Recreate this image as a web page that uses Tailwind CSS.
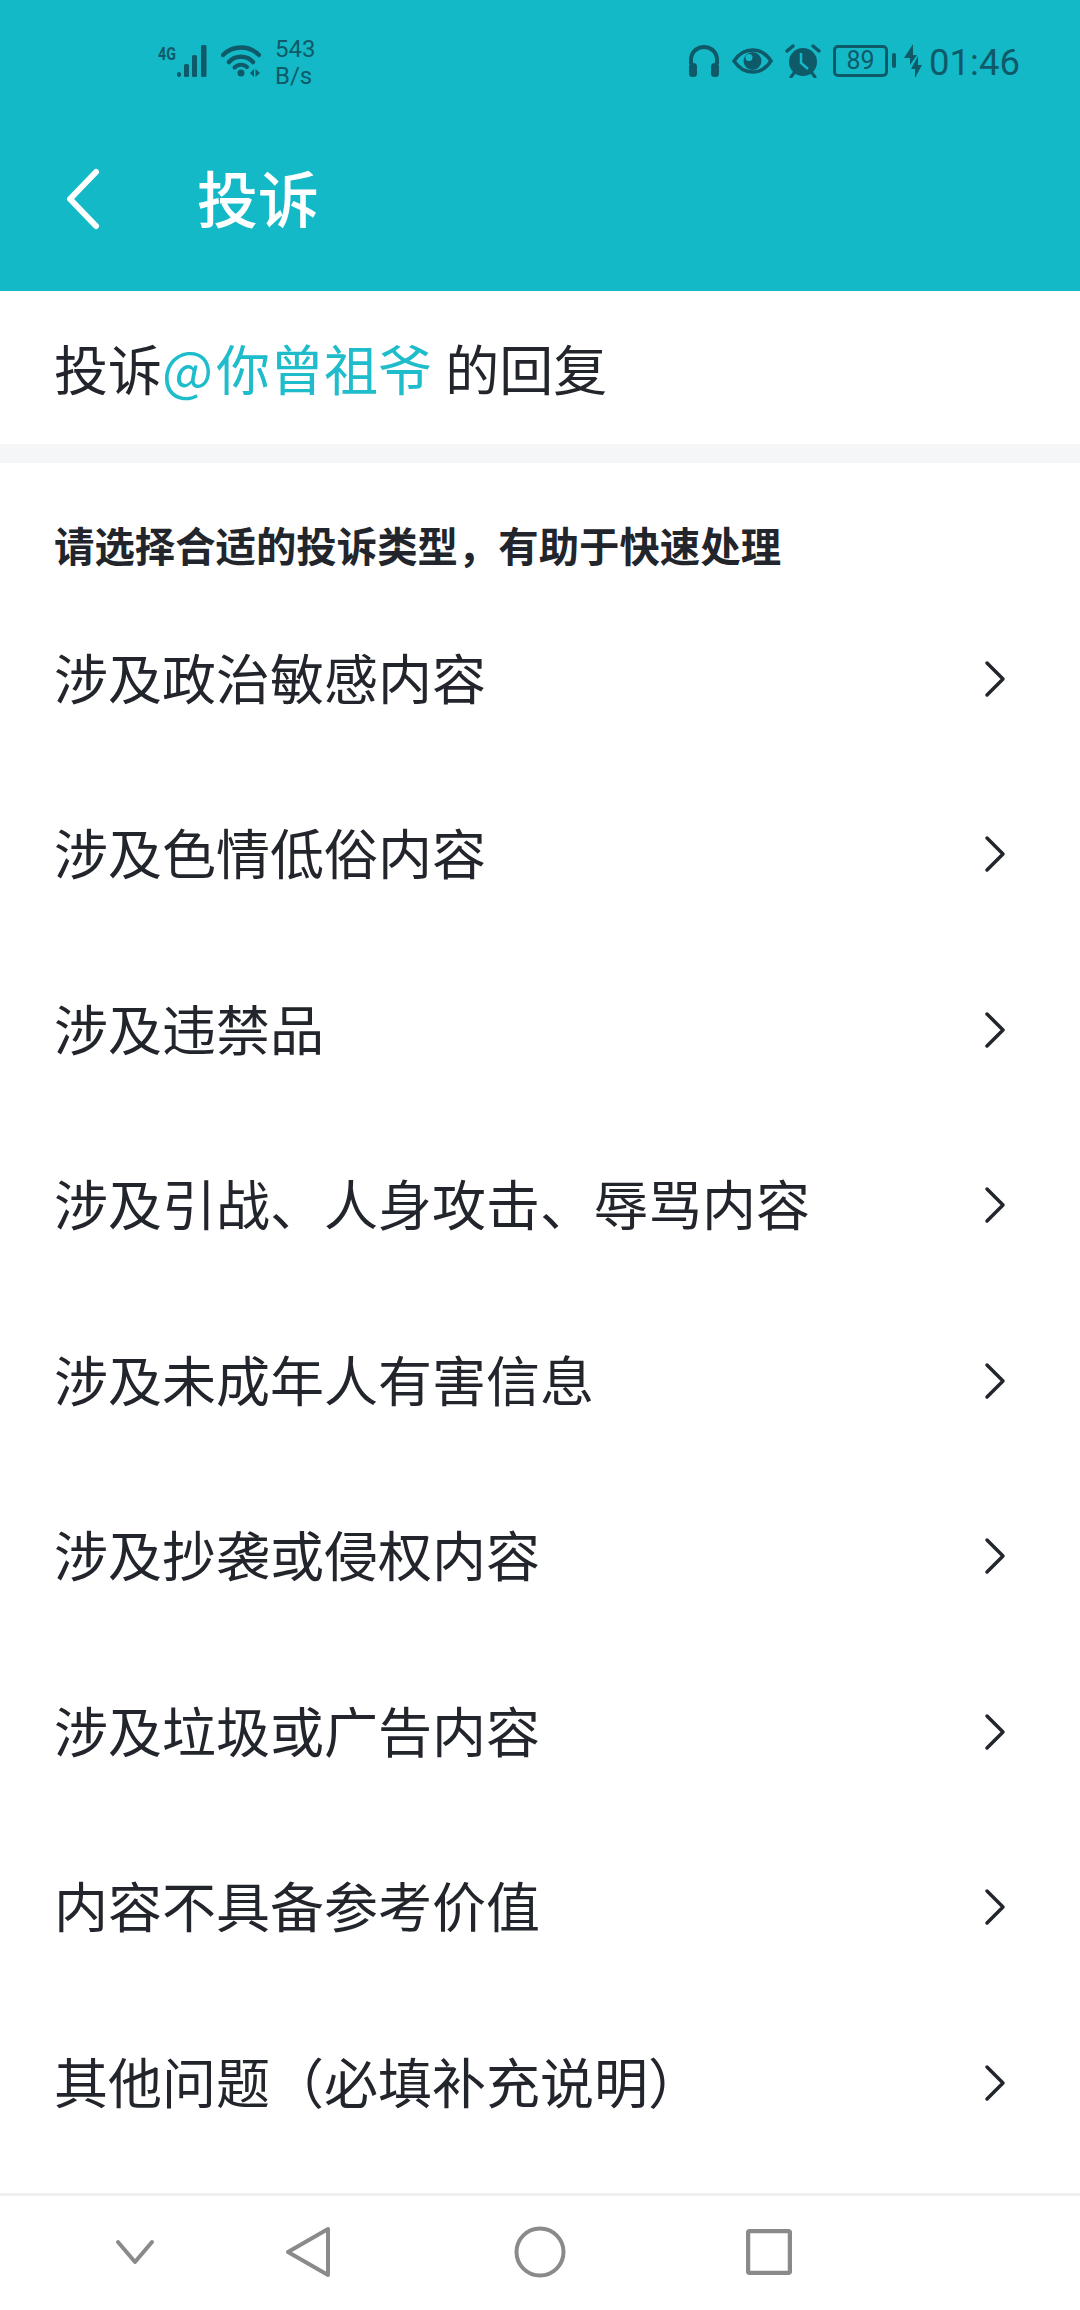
<!DOCTYPE html>
<html lang="zh-CN">
<head>
    <meta charset="UTF-8">
    <meta name="viewport" content="width=device-width, initial-scale=1.0">
    <title>投诉</title>
    <script src="https://cdn.jsdelivr.net/npm/@tailwindcss/browser@4"></script>
</head>
<body class="bg-white font-['Noto_Sans_CJK_SC',sans-serif]">
    <div class="w-[1080px] h-[2310px] flex flex-col overflow-hidden">
        <!-- 顶部 -->
        <header class="bg-[#14b9c8] h-[291px] shrink-0">
            <div class="h-[106px] pt-[15px] flex items-center justify-between pl-[158px] pr-[60px] text-[#0f5a69] font-['Roboto',sans-serif]">
                <div class="flex items-center">
                    <span class="w-[19px] h-[32px] text-[19px] leading-[17px] font-bold scale-x-75 origin-left">4G</span>
                    <svg class="w-[34px] h-[32px]" viewBox="19 0 34 32" fill="currentColor">
                        <rect x="19" y="27" width="4" height="5" rx="2"/>
                        <rect x="26" y="19" width="5" height="13" rx="1.5"/>
                        <rect x="34" y="10" width="5" height="22" rx="1.5"/>
                        <rect x="43" y="0" width="5.5" height="32" rx="1.5"/>
                    </svg>
                    <svg class="w-[40px] h-[32px] ml-[10px]" viewBox="0 0 40 32" fill="none" stroke="currentColor" stroke-linecap="round">
                        <path d="M2 10 C12 0 28 0 38 10" stroke-width="4.5"/>
                        <path d="M8 17 C14 10 26 10 32 17" stroke-width="4.5"/>
                        <path d="M13.5 22.5 C17 19 23 19 26 22" stroke-width="4"/>
                        <circle cx="20" cy="28" r="3.5" fill="currentColor" stroke="none"/>
                        <path d="M29 28 L33 24 V32 Z M34.5 24 L39 28 L34.5 32 Z" fill="currentColor" stroke="none"/>
                    </svg>
                    <div class="ml-[14px] mt-[4px] w-[40px] text-[24px] leading-[27px]">
                        <div>543</div>
                        <div>B/s</div>
                    </div>
                </div>
                <div class="flex items-center">
                    <svg class="w-[32px] h-[32px]" viewBox="0 0 32 32" fill="currentColor">
                        <path d="M3 19 V15 C3 7 9 2 16 2 C23 2 29 7 29 15 V19" fill="none" stroke="currentColor" stroke-width="4"/>
                        <rect x="1" y="18" width="8" height="14" rx="3.5"/>
                        <rect x="23" y="18" width="8" height="14" rx="3.5"/>
                    </svg>
                    <svg class="w-[41px] h-[26px] ml-[12px]" viewBox="0 0 41 26" fill="none">
                        <path d="M2 13 C8 4 14 2 20.5 2 C27 2 33 4 39 13 C33 22 27 24 20.5 24 C14 24 8 22 2 13 Z" stroke="currentColor" stroke-width="3.5"/>
                        <circle cx="20.5" cy="13" r="9" fill="currentColor"/>
                        <circle cx="17" cy="9.5" r="3.5" fill="#14b9c8"/>
                    </svg>
                    <svg class="w-[36px] h-[34px] ml-[12px]" viewBox="0 0 36 34" fill="none">
                        <circle cx="18" cy="18" r="14" fill="currentColor"/>
                        <path d="M16 9 V19 L23 25" stroke="#14b9c8" stroke-width="2.5"/>
                        <path d="M2 7 L8 2 M34 7 L28 2" stroke="currentColor" stroke-width="3.5" stroke-linecap="round"/>
                        <path d="M9 29 L6 33 M27 29 L30 33" stroke="currentColor" stroke-width="3" stroke-linecap="round"/>
                    </svg>
                    <div class="ml-[12px] w-[55px] h-[32px] border-[3px] border-[#0f5a69] rounded-[5px] flex items-center justify-center text-[25px] leading-none">89</div>
                    <div class="ml-[4px] w-[4px] h-[15px] rounded-[2px] bg-[#0f5a69]"></div>
                    <svg class="w-[18px] h-[34px] ml-[8px]" viewBox="0 0 18 34" fill="currentColor">
                        <path d="M9 0 V11 H13 L6 21 V14 H0 Z"/>
                        <path d="M14 12 V21 H18 L11 34 V25 H7 Z"/>
                    </svg>
                    <span class="ml-[7px] mt-[5px] text-[36.5px] leading-none">01:46</span>
                </div>
            </div>
            <div class="h-[185px] flex items-center">
                <svg class="w-[38px] h-[62px] ml-[63px]" viewBox="0 0 38 62" fill="none" stroke="white" stroke-width="6" stroke-linecap="round" stroke-linejoin="round">
                    <path d="M33 4 L7 31 L33 58"/>
                </svg>
                <h1 class="ml-[96px] mb-[5px] text-[61px] leading-none font-medium text-white">投诉</h1>
            </div>
        </header>

        <div class="h-[153px] shrink-0 flex items-center pl-[54px] text-[54px] text-[#22252b] whitespace-pre">投诉<span class="text-[#1fbccb] mr-[1px]"><span class="mr-[3px]">@</span>你曾祖爷</span> 的回复</div>
        <div class="h-[19px] shrink-0 bg-[#f5f6f8]"></div>

        <p class="pt-[54px] pb-[18px] pl-[54px] text-[40.4px] leading-[56px] font-bold text-[#22252b]">请选择合适的投诉类型，有助于快速处理</p>

        <ul id="reasons" class="text-[54px] text-[#22252b]">
            <li class="h-[175.5px] flex items-center justify-between pl-[54px] pr-[74px]"><span class="mb-[5px]">涉及政治敏感内容</span><svg class="w-[22px] h-[38px]" viewBox="0 0 22 38" fill="none" stroke="#22252b" stroke-width="3.5" stroke-linecap="round" stroke-linejoin="round"><path d="M3 3 L19 19 L3 35"/></svg></li>
            <li class="h-[175.5px] flex items-center justify-between pl-[54px] pr-[74px]"><span class="mb-[5px]">涉及色情低俗内容</span><svg class="w-[22px] h-[38px]" viewBox="0 0 22 38" fill="none" stroke="#22252b" stroke-width="3.5" stroke-linecap="round" stroke-linejoin="round"><path d="M3 3 L19 19 L3 35"/></svg></li>
            <li class="h-[175.5px] flex items-center justify-between pl-[54px] pr-[74px]"><span class="mb-[5px]">涉及违禁品</span><svg class="w-[22px] h-[38px]" viewBox="0 0 22 38" fill="none" stroke="#22252b" stroke-width="3.5" stroke-linecap="round" stroke-linejoin="round"><path d="M3 3 L19 19 L3 35"/></svg></li>
            <li class="h-[175.5px] flex items-center justify-between pl-[54px] pr-[74px]"><span class="mb-[5px]">涉及引战、人身攻击、辱骂内容</span><svg class="w-[22px] h-[38px]" viewBox="0 0 22 38" fill="none" stroke="#22252b" stroke-width="3.5" stroke-linecap="round" stroke-linejoin="round"><path d="M3 3 L19 19 L3 35"/></svg></li>
            <li class="h-[175.5px] flex items-center justify-between pl-[54px] pr-[74px]"><span class="mb-[5px]">涉及未成年人有害信息</span><svg class="w-[22px] h-[38px]" viewBox="0 0 22 38" fill="none" stroke="#22252b" stroke-width="3.5" stroke-linecap="round" stroke-linejoin="round"><path d="M3 3 L19 19 L3 35"/></svg></li>
            <li class="h-[175.5px] flex items-center justify-between pl-[54px] pr-[74px]"><span class="mb-[5px]">涉及抄袭或侵权内容</span><svg class="w-[22px] h-[38px]" viewBox="0 0 22 38" fill="none" stroke="#22252b" stroke-width="3.5" stroke-linecap="round" stroke-linejoin="round"><path d="M3 3 L19 19 L3 35"/></svg></li>
            <li class="h-[175.5px] flex items-center justify-between pl-[54px] pr-[74px]"><span class="mb-[5px]">涉及垃圾或广告内容</span><svg class="w-[22px] h-[38px]" viewBox="0 0 22 38" fill="none" stroke="#22252b" stroke-width="3.5" stroke-linecap="round" stroke-linejoin="round"><path d="M3 3 L19 19 L3 35"/></svg></li>
            <li class="h-[175.5px] flex items-center justify-between pl-[54px] pr-[74px]"><span class="mb-[5px]">内容不具备参考价值</span><svg class="w-[22px] h-[38px]" viewBox="0 0 22 38" fill="none" stroke="#22252b" stroke-width="3.5" stroke-linecap="round" stroke-linejoin="round"><path d="M3 3 L19 19 L3 35"/></svg></li>
            <li class="h-[175.5px] flex items-center justify-between pl-[54px] pr-[74px]"><span class="mb-[5px]">其他问题（必填补充说明）</span><svg class="w-[22px] h-[38px]" viewBox="0 0 22 38" fill="none" stroke="#22252b" stroke-width="3.5" stroke-linecap="round" stroke-linejoin="round"><path d="M3 3 L19 19 L3 35"/></svg></li>
        </ul>

        <!-- 系统导航栏 -->
        <nav class="mt-auto h-[117px] shrink-0 border-t-[3px] border-[#f0f0f0] flex items-center text-[#8a8a8a]">
            <svg class="w-[40px] h-[26px] ml-[115px] mb-[3px]" viewBox="0 0 40 26" fill="none" stroke="currentColor" stroke-width="4" stroke-linecap="round" stroke-linejoin="round"><path d="M3 3 L20 23 L37 3"/></svg>
            <svg class="w-[46px] h-[52px] ml-[130px] mb-[3px]" viewBox="0 0 46 52" fill="none" stroke="currentColor" stroke-width="4" stroke-linejoin="round"><path d="M43 3 V49 L3 26 Z"/></svg>
            <svg class="w-[52px] h-[52px] ml-[183px] mb-[3px]" viewBox="0 0 52 52" fill="none" stroke="currentColor" stroke-width="4"><circle cx="26" cy="26" r="23.5"/></svg>
            <svg class="w-[46px] h-[46px] ml-[180px] mb-[3px]" viewBox="0 0 46 46" fill="none" stroke="currentColor" stroke-width="4.5" stroke-linejoin="round"><rect x="2" y="2" width="42" height="42" rx="2"/></svg>
        </nav>
    </div>
</body>
</html>
